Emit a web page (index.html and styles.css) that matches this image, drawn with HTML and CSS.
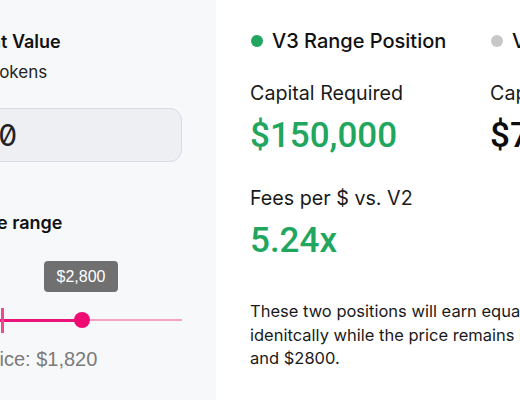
FILE: index.html
```html
<!DOCTYPE html>
<html>
<head>
<meta charset="utf-8">
<link rel="stylesheet" href="styles.css">
</head>
<body>
<div class="page">
  <aside class="controls">
    <div class="controls-inner">
      <div class="field-title">Current Value</div>
      <div class="field-sub">Paired tokens</div>
      <div class="input">100</div>
      <div class="range-title">Choose range</div>
      <div class="slider">
        <div class="tooltip">$2,800</div>
        <div class="track">
          <div class="fill" style="width:141px"></div>
          <div class="tick" style="left:60px"></div>
          <div class="thumb" style="left:141px"></div>
        </div>
      </div>
      <div class="caption">Spot price: $1,820</div>
    </div>
  </aside>
  <main class="results">
    <div class="columns">
      <section class="col">
        <div class="col-head"><span class="dot green"></span>V3 Range Position</div>
        <div class="label">Capital Required</div>
        <div class="value green-text">$150,000</div>
        <div class="label fees">Fees per $ vs. V2</div>
        <div class="value green-text">5.24x</div>
      </section>
      <section class="col">
        <div class="col-head"><span class="dot gray"></span>V2 Position</div>
        <div class="label">Capital Required</div>
        <div class="value">$785,000</div>
      </section>
    </div>
    <p class="note">These two positions will earn equal fees and perform idenitcally while the price remains between $1500 and $2800.</p>
  </main>
</div>
</body>
</html>
```
FILE: styles.css
```css
html, body {
  margin: 0;
  padding: 0;
  overflow: hidden;
  background: #ffffff;
}
body {
  font-family: Inter, "Noto Sans", sans-serif;
  color: #111;
}
.page {
  display: flex;
  width: 1000px;
  height: 400px;
}
.controls {
  width: 216px;
  flex: none;
  background: #f7f8fa;
  overflow: hidden;
}
.controls-inner {
  margin-left: -59px;
  width: 241px;
  padding-top: 30px;
  display: flex;
  flex-direction: column;
}
.field-title {
  font-size: 18px;
  font-weight: 600;
  line-height: 24px;
}
.field-sub {
  font-size: 17px;
  line-height: 24px;
  margin-top: 6px;
  margin-left: -3px;
  color: #222;
}
.input {
  margin-top: 24px;
  box-sizing: border-box;
  height: 54px;
  border: 1.5px solid #d9dae2;
  border-radius: 12px;
  background: #eeeff3;
  padding-left: 17px;
  display: flex;
  align-items: center;
  font-size: 30px;
  font-feature-settings: "zero" 1, "tnum" 1;
  color: #222;
}
.range-title {
  margin-top: 49px;
  font-size: 18px;
  font-weight: 600;
  line-height: 24px;
}
.slider {
  position: relative;
  margin-top: 84px;
  height: 2px;
}
.tooltip {
  position: absolute;
  left: 103px;
  bottom: 29px;
  width: 74px;
  height: 31px;
  border-radius: 4px;
  background: #707070;
  color: #fff;
  font-family: "Liberation Sans", Arial, sans-serif;
  font-size: 16px;
  display: flex;
  align-items: center;
  justify-content: center;
}
.track {
  position: relative;
  height: 2px;
  background: #f4a3c3;
}
.fill {
  height: 3px;
  margin-top: -0.5px;
  background: #e9137a;
}
.tick {
  position: absolute;
  top: -11px;
  width: 3px;
  height: 25px;
  background: #ee4a90;
}
.thumb {
  position: absolute;
  top: -7px;
  width: 16px;
  height: 16px;
  margin-left: -8px;
  border-radius: 50%;
  background: #f00b72;
}
.caption {
  margin-top: 26px;
  margin-left: -6px;
  font-family: "Liberation Sans", Arial, sans-serif;
  font-size: 20px;
  line-height: 24px;
  color: #7b7b7b;
}
.results {
  padding-left: 34px;
  padding-top: 29px;
}
.columns {
  display: flex;
}
.col {
  width: 240px;
  display: flex;
  flex-direction: column;
}
.col-head {
  display: flex;
  align-items: center;
  font-size: 20px;
  font-weight: 500;
  line-height: 24px;
}
.dot {
  width: 12px;
  height: 12px;
  border-radius: 50%;
  margin-left: 1px;
  margin-right: 9px;
}
.dot.green { background: #21a65f; }
.dot.gray { background: #c8c8c8; }
.label {
  margin-top: 28px;
  font-size: 19.7px;
  line-height: 24px;
  color: #1a1a1a;
}
.label.fees {
  margin-top: 30px;
}
.value {
  margin-top: 11px;
  font-family: Roboto, Inter, sans-serif;
  font-size: 35px;
  font-weight: 500;
  line-height: 40px;
  color: #0d0d0d;
}
.green-text { color: #21a65f; }
.note {
  margin: 39px 0 0 0;
  width: 420px;
  font-size: 16.5px;
  line-height: 23.5px;
  color: #1a1a1a;
}
```
